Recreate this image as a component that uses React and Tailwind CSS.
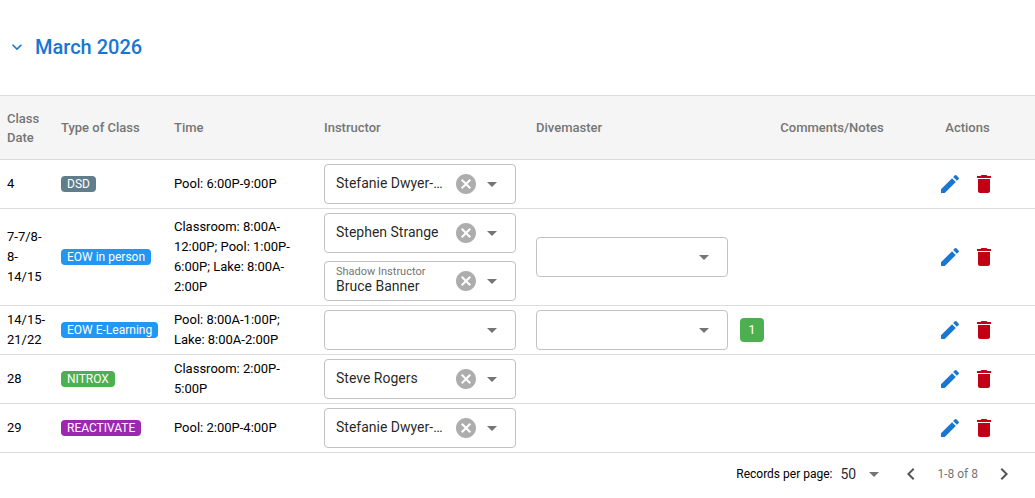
import { useState } from "react";
import clsx from "clsx";
import {
  MdArrowDropDown,
  MdCancel,
  MdChevronLeft,
  MdChevronRight,
  MdDelete,
  MdEdit,
  MdExpandMore,
} from "react-icons/md";

const people = ["Stefanie Dwyer-Collins", "Stephen Strange", "Bruce Banner", "Steve Rogers"];

const initialClasses = [
  {
    id: 1,
    date: "4",
    type: "DSD",
    time: "Pool: 6:00P-9:00P",
    instructor: "Stefanie Dwyer-Collins",
  },
  {
    id: 2,
    date: "7-7/8-8-14/15",
    type: "EOW in person",
    time: "Classroom: 8:00A-12:00P; Pool: 1:00P-6:00P; Lake: 8:00A-2:00P",
    instructor: "Stephen Strange",
    shadow: "Bruce Banner",
    divemaster: "",
  },
  {
    id: 3,
    date: "14/15-21/22",
    type: "EOW E-Learning",
    time: "Pool: 8:00A-1:00P; Lake: 8:00A-2:00P",
    instructor: "",
    divemaster: "",
    notes: 1,
  },
  {
    id: 4,
    date: "28",
    type: "NITROX",
    time: "Classroom: 2:00P-5:00P",
    instructor: "Steve Rogers",
  },
  {
    id: 5,
    date: "29",
    type: "REACTIVATE",
    time: "Pool: 2:00P-4:00P",
    instructor: "Stefanie Dwyer-Collins",
  },
];

const badgeColors = {
  DSD: "bg-[#607d8b]",
  "EOW in person": "bg-[#2196f3]",
  "EOW E-Learning": "bg-[#2196f3]",
  NITROX: "bg-[#4caf50]",
  REACTIVATE: "bg-[#9c27b0]",
};

function PersonSelect({ id, name, label, value, onChange }) {
  return (
    <div className="grid h-10 w-48 rounded-sm border border-[#c2c2c2] bg-white">
      {label && (
        <label
          htmlFor={id}
          className="pointer-events-none z-10 col-start-1 row-start-1 self-start pt-1 pl-[11px] text-[11px] leading-3 text-[#757575]"
        >
          {label}
        </label>
      )}
      <select
        id={id}
        aria-label={name}
        value={value}
        onChange={(e) => onChange(e.target.value)}
        className={clsx(
          "col-start-1 row-start-1 h-full w-full min-w-0 appearance-none truncate pr-[68px] pl-[11px] text-sm text-black/87 outline-none",
          label ? "pt-[10px]" : "pb-[2px]"
        )}
      >
        <option value=""></option>
        {people.map((p) => (
          <option key={p} value={p}>
            {p}
          </option>
        ))}
      </select>
      <div className="pointer-events-none z-10 col-start-1 row-start-1 flex items-center gap-[2px] self-center justify-self-end pr-[11px]">
        {value && (
          <button
            type="button"
            aria-label="Clear"
            onClick={() => onChange("")}
            className="pointer-events-auto text-[#adadad]"
          >
            <MdCancel className="size-6" />
          </button>
        )}
        <MdArrowDropDown className="size-6 text-[#757575]" />
      </div>
    </div>
  );
}

export default function App() {
  const [open, setOpen] = useState(true);
  const [classes, setClasses] = useState(initialClasses);
  const [perPage, setPerPage] = useState("50");

  const update = (id, key, value) =>
    setClasses((prev) => prev.map((c) => (c.id === id ? { ...c, [key]: value } : c)));

  const remove = (id) => setClasses((prev) => prev.filter((c) => c.id !== id));

  return (
    <div className="bg-white font-[Roboto,sans-serif] text-[13px] leading-5 text-black">
      <h2 className="flex h-[95px] items-center pb-[2px] text-xl font-medium text-[#1976d2]">
        <button
          type="button"
          aria-expanded={open}
          onClick={() => setOpen(!open)}
          className="flex items-center gap-2 pl-[7px]"
        >
          <MdExpandMore className="size-5" />
          <span>March 2026</span>
        </button>
      </h2>

      {open && (
        <>
          <table className="w-full table-fixed border-separate border-spacing-0">
            <colgroup>
              <col className="w-[53px]" />
              <col className="w-[113px]" />
              <col className="w-[150px]" />
              <col className="w-[212px]" />
              <col className="w-[204px]" />
              <col />
              <col className="w-[103px]" />
            </colgroup>
            <thead>
              <tr className="h-[65px] bg-[#f5f5f5] text-left leading-[19px] text-[#757575] *:border-y *:border-[#dcdcdc] *:font-medium">
                <th className="pl-[7px]">Class Date</th>
                <th className="px-2">Type of Class</th>
                <th className="px-2">Time</th>
                <th className="px-2">Instructor</th>
                <th className="px-2">Divemaster</th>
                <th className="px-2 text-center">Comments/Notes</th>
                <th className="pr-10 pl-2 text-center">Actions</th>
              </tr>
            </thead>
            <tbody>
              {classes.map((c) => (
                <tr key={c.id} className="*:border-b *:border-[#dcdcdc] *:py-1">
                  <td className="pr-1 pl-[7px]">{c.date}</td>
                  <td className="px-2">
                    <div className="flex">
                      <span
                        className={clsx(
                          "rounded-sm px-[6px] py-[2px] text-xs leading-3 whitespace-nowrap text-white",
                          badgeColors[c.type]
                        )}
                      >
                        {c.type}
                      </span>
                    </div>
                  </td>
                  <td className="px-2">{c.time}</td>
                  <td className="px-2">
                    <div className="flex flex-col gap-2">
                      <PersonSelect
                        id={`instructor-${c.id}`}
                        name="Instructor"
                        value={c.instructor}
                        onChange={(v) => update(c.id, "instructor", v)}
                      />
                      {c.shadow !== undefined && (
                        <PersonSelect
                          id={`shadow-${c.id}`}
                          label="Shadow Instructor"
                          value={c.shadow}
                          onChange={(v) => update(c.id, "shadow", v)}
                        />
                      )}
                    </div>
                  </td>
                  <td className="pl-2">
                    {c.divemaster !== undefined && (
                      <PersonSelect
                        id={`divemaster-${c.id}`}
                        name="Divemaster"
                        value={c.divemaster}
                        onChange={(v) => update(c.id, "divemaster", v)}
                      />
                    )}
                  </td>
                  <td className="px-2">
                    {c.notes && (
                      <button
                        type="button"
                        className="flex size-6 items-center justify-center rounded-sm bg-[#4caf50] text-white"
                      >
                        {c.notes}
                      </button>
                    )}
                  </td>
                  <td className="pl-[6px]">
                    <div className="flex gap-[10px]">
                      <button type="button" aria-label="Edit" className="text-[#1976d2]">
                        <MdEdit className="size-6" />
                      </button>
                      <button
                        type="button"
                        aria-label="Delete"
                        onClick={() => remove(c.id)}
                        className="text-[#c10015]"
                      >
                        <MdDelete className="size-6" />
                      </button>
                    </div>
                  </td>
                </tr>
              ))}
            </tbody>
          </table>

          {/* Pagination */}
          <div className="flex h-[42px] items-center justify-end pr-[19px] text-xs">
            <label htmlFor="per-page">Records per page:</label>
            <div className="ml-2 grid w-[46px] items-center">
              <select
                id="per-page"
                value={perPage}
                onChange={(e) => setPerPage(e.target.value)}
                className="col-start-1 row-start-1 appearance-none text-sm text-black/87 outline-none"
              >
                <option>25</option>
                <option>50</option>
                <option>100</option>
              </select>
              <MdArrowDropDown className="pointer-events-none col-start-1 row-start-1 size-6 justify-self-end text-[#757575]" />
            </div>
            <button type="button" aria-label="Previous page" className="ml-[13px] text-[#555555]">
              <MdChevronLeft className="size-6" />
            </button>
            <span className="px-[14px] text-[#757575]">1-8 of 8</span>
            <button type="button" aria-label="Next page" className="text-[#555555]">
              <MdChevronRight className="size-6" />
            </button>
          </div>
        </>
      )}
    </div>
  );
}
